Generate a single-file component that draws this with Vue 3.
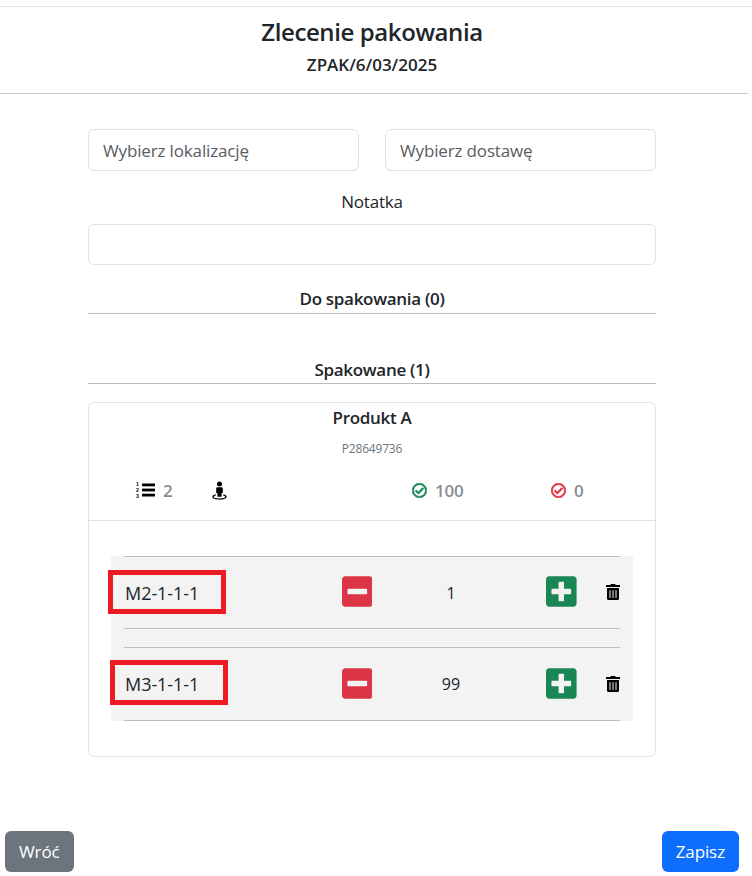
<script setup>
const rows = [
  { id: 1, location: 'M2-1-1-1', qty: 1 },
  { id: 2, location: 'M3-1-1-1', qty: 99 },
]
</script>

<template>
  <div class="page">
    <header class="head">
      <h3>Zlecenie pakowania</h3>
      <h6>ZPAK/6/03/2025</h6>
    </header>
    <hr class="head-line" />

    <main class="content">
      <div class="selects">
        <input class="field" placeholder="Wybierz lokalizację" />
        <input class="field" placeholder="Wybierz dostawę" />
      </div>
      <label class="note-label">Notatka</label>
      <input class="field note" />

      <div class="section first">Do spakowania (0)</div>
      <div class="section second">Spakowane (1)</div>

      <section class="card">
        <div class="card-head">
          <div class="name">Produkt A</div>
          <div class="code">P28649736</div>
          <div class="stats">
            <span class="stat">
              <span class="list-ic">
                <span class="nums"><b>1</b><b>2</b><b>3</b></span>
                <svg width="13" height="16" viewBox="0 0 13 16">
                  <rect y="1.500" width="13" height="2.800" />
                  <rect y="6.600" width="13" height="2.800" />
                  <rect y="11.700" width="13" height="2.800" />
                </svg>
              </span>
              2
            </span>
            <span class="stat">
              <svg class="ic" width="15" height="19" viewBox="0 0 15 19">
                <circle cx="7.500" cy="3" r="2.500" />
                <path d="M5.500 6.200h4a1.300 1.300 0 0 1 1.300 1.300V12H9.600v3.800H5.400V12H4.200V7.500a1.300 1.300 0 0 1 1.300-1.300z" />
                <path d="M3.800 13.200C1.600 13.800.3 14.700.3 15.800c0 1.700 3.200 2.900 7.200 2.900s7.200-1.200 7.200-2.900c0-1.100-1.300-2-3.500-2.600v1.200c1.300.4 2.100.9 2.100 1.400 0 .9-2.600 1.600-5.800 1.600s-5.800-.7-5.800-1.600c0-.5.800-1 2.100-1.400z" />
              </svg>
            </span>
            <span class="stat">
              <svg class="ic bold green" width="15" height="15" viewBox="0 0 512 512">
                <path d="M256 8C119.033 8 8 119.033 8 256s111.033 248 248 248 248-111.033 248-248S392.967 8 256 8zm0 48c110.532 0 200 89.451 200 200 0 110.532-89.451 200-200 200-110.532 0-200-89.451-200-200 0-110.532 89.451-200 200-200m140.204 130.267l-22.536-22.718c-4.667-4.705-12.265-4.736-16.970-.068L215.346 303.697l-59.792-60.277c-4.667-4.705-12.265-4.736-16.970-.069l-22.719 22.536c-4.705 4.667-4.736 12.265-.068 16.971l90.781 91.516c4.667 4.705 12.265 4.736 16.970.068l172.589-171.204c4.704-4.668 4.734-12.266.067-16.971z" />
              </svg>
              100
            </span>
            <span class="stat">
              <svg class="ic bold red" width="15" height="15" viewBox="0 0 512 512">
                <path d="M256 8C119.033 8 8 119.033 8 256s111.033 248 248 248 248-111.033 248-248S392.967 8 256 8zm0 48c110.532 0 200 89.451 200 200 0 110.532-89.451 200-200 200-110.532 0-200-89.451-200-200 0-110.532 89.451-200 200-200m140.204 130.267l-22.536-22.718c-4.667-4.705-12.265-4.736-16.970-.068L215.346 303.697l-59.792-60.277c-4.667-4.705-12.265-4.736-16.970-.069l-22.719 22.536c-4.705 4.667-4.736 12.265-.068 16.971l90.781 91.516c4.667 4.705 12.265 4.736 16.970.068l172.589-171.204c4.704-4.668 4.734-12.266.067-16.971z" />
              </svg>
              0
            </span>
          </div>
        </div>

        <div class="card-body">
          <div class="rows">
            <div v-for="row in rows" :key="row.id" class="row">
              <span class="loc">{{ row.location }}</span>
              <svg class="sq red" width="30.600" height="35" viewBox="0 0 448 512">
                <path d="M400 32H48C21.500 32 0 53.500 0 80v352c0 26.500 21.500 48 48 48h352c26.500 0 48-21.500 48-48V80c0-26.500-21.500-48-48-48zM92 296c-6.600 0-12-5.400-12-12v-56c0-6.600 5.400-12 12-12h264c6.600 0 12 5.400 12 12v56c0 6.600-5.400 12-12 12H92z" />
              </svg>
              <span class="qty">{{ row.qty }}</span>
              <svg class="sq green plus" width="30.600" height="35" viewBox="0 0 448 512">
                <path d="M400 32H48C21.500 32 0 53.500 0 80v352c0 26.500 21.500 48 48 48h352c26.500 0 48-21.500 48-48V80c0-26.500-21.500-48-48-48zm-32 252c0 6.600-5.400 12-12 12h-92v92c0 6.600-5.400 12-12 12h-56c-6.600 0-12-5.400-12-12v-92H92c-6.600 0-12-5.400-12-12v-56c0-6.600 5.400-12 12-12h92v-92c0-6.600 5.400-12 12-12h56c6.600 0 12 5.400 12 12v92h92c6.600 0 12 5.400 12 12v56z" />
              </svg>
              <svg class="trash" width="14" height="16" viewBox="0 0 448 512">
                <path d="M32 464a48 48 0 0 0 48 48h288a48 48 0 0 0 48-48V128H32zm272-256a16 16 0 0 1 32 0v224a16 16 0 0 1-32 0zm-96 0a16 16 0 0 1 32 0v224a16 16 0 0 1-32 0zm-96 0a16 16 0 0 1 32 0v224a16 16 0 0 1-32 0zM432 32H312l-9.400-18.700A24 24 0 0 0 281.100 0H166.800a23.720 23.720 0 0 0-21.400 13.300L136 32H16A16 16 0 0 0 0 48v32a16 16 0 0 0 16 16h416a16 16 0 0 0 16-16V48a16 16 0 0 0-16-16z" />
              </svg>
              <i class="mark" :class="{ alt: row.id === 2 }"></i>
            </div>
          </div>
        </div>
      </section>
    </main>

    <footer class="actions">
      <button class="btn grey">Wróć</button>
      <button class="btn blue">Zapisz</button>
    </footer>
  </div>
</template>

<style scoped>
.page {
  width: 752px;
  height: 876px;
  font-family: "Open Sans", "Noto Sans", sans-serif;
  color: #212529;
  display: flex;
  flex-direction: column;
  overflow: hidden;
}

.head {
  margin-top: 6px;
  height: 86px;
  width: 752px;
  box-sizing: border-box;
  padding-right: 8px;
  border-top: 1px solid #e2e2e2;
  text-align: center;
}
.head h3 {
  margin: 9px 0 0;
  font-size: 24px;
  line-height: 32px;
  font-weight: 600;
  letter-spacing: -0.4px;
}
.head h6 {
  margin: 7px 0 0;
  font-size: 17px;
  line-height: 20px;
  font-weight: 600;
}
.head-line {
  width: 748px;
  height: 1px;
  margin: 1px 0 0;
  border: 0;
  background: #c8c8c8;
}

.content {
  width: 568px;
  margin: 35px 0 0 88px;
  flex: 1;
}

.selects {
  display: grid;
  grid-template-columns: 271px 271px;
  justify-content: space-between;
}

.field {
  box-sizing: border-box;
  width: 100%;
  height: 42px;
  padding: 0 14px;
  border: 1px solid #dee2e6;
  border-radius: 6px;
  font: inherit;
  font-size: 17px;
  letter-spacing: -0.15px;
  color: #212529;
  background: #fff;
  outline: none;
}
.field::placeholder {
  color: #595c5f;
  opacity: 1;
}

.note-label {
  display: block;
  margin-top: 19px;
  text-align: center;
  font-size: 17px;
  line-height: 24px;
  letter-spacing: -0.2px;
}
.note {
  display: block;
  height: 41px;
  margin-top: 10px;
}

.section {
  box-sizing: border-box;
  height: 26px;
  border-bottom: 1px solid #bdbdbd;
  text-align: center;
  font-size: 17px;
  line-height: 23px;
  font-weight: 600;
  letter-spacing: -0.3px;
}
.section.first {
  margin-top: 23px;
  line-height: 21px;
}
.section.second {
  margin-top: 44px;
}

.card {
  margin-top: 18px;
  height: 355px;
  box-sizing: border-box;
  border: 1px solid #dee2e6;
  border-radius: 6px;
}

.card-head {
  height: 118px;
  box-sizing: border-box;
  border-bottom: 1px solid #dee2e6;
  text-align: center;
}
.name {
  padding-top: 3px;
  font-size: 17px;
  line-height: 24px;
  font-weight: 600;
  letter-spacing: -0.3px;
}
.code {
  margin-top: 11px;
  font-size: 12px;
  line-height: 16px;
  color: #6c757d;
  letter-spacing: -0.2px;
}
.stats {
  display: grid;
  grid-template-columns: 76px 200px 139px auto;
  justify-content: start;
  padding-left: 47px;
  margin-top: 21px;
  text-align: left;
}
.stat {
  display: flex;
  align-items: center;
  gap: 8px;
  height: 24px;
  font-size: 17px;
  font-weight: 600;
  letter-spacing: -0.2px;
  color: #8a8e93;
}
.ic {
  fill: #000;
  flex: none;
}
.ic.bold {
  stroke-width: 24;
}
.ic.green {
  fill: #198754;
  stroke: #198754;
}
.ic.red {
  fill: #dc3545;
  stroke: #dc3545;
}

.list-ic {
  display: flex;
  align-items: center;
  gap: 1px;
  fill: #000;
}
.nums {
  display: flex;
  flex-direction: column;
  width: 5px;
  color: #000;
}
.nums b {
  font-family: "Liberation Sans", sans-serif;
  font-size: 5.200px;
  line-height: 6px;
  font-weight: 700;
}

.card-body {
  padding: 35px 22px 0;
}
.rows {
  background: #f3f3f3;
  padding: 0 13px;
  height: 165px;
}
.row {
  position: relative;
  box-sizing: border-box;
  height: 73px;
  display: grid;
  grid-template-columns: 186px 94px 94px 79px 43px;
  align-items: center;
  border-top: 1px solid #bdbdbd;
  border-bottom: 1px solid #bdbdbd;
}
.row + .row {
  margin-top: 18px;
  height: 74px;
}
.loc {
  padding-left: 1px;
  font-size: 18px;
  letter-spacing: -0.05px;
}
.sq {
  justify-self: center;
  margin-bottom: 2px;
}
.sq.plus {
  justify-self: end;
}
.sq.red {
  fill: #dc3545;
}
.sq.green {
  fill: #198754;
}
.qty {
  text-align: center;
  font-size: 16px;
  color: #212529;
}
.trash {
  justify-self: end;
  fill: #000;
  margin-bottom: 1px;
}

/* red annotation frames over the location cell */
.mark {
  position: absolute;
  left: -16px;
  top: 13px;
  width: 118px;
  height: 44px;
  box-sizing: border-box;
  border: 5px solid #ed1c24;
}
.mark.alt {
  left: -14px;
  top: 12px;
  height: 45px;
}

.actions {
  width: 744px;
  box-sizing: border-box;
  display: flex;
  justify-content: space-between;
  padding: 0 5px 4px;
}
.btn {
  height: 41px;
  padding: 0 14px;
  border: 0;
  border-radius: 6px;
  font-family: inherit;
  font-size: 17px;
  letter-spacing: -0.1px;
  color: #fff;
}
.btn.grey {
  background: #6c757d;
}
.btn.blue {
  background: #0d6efd;
}
</style>
